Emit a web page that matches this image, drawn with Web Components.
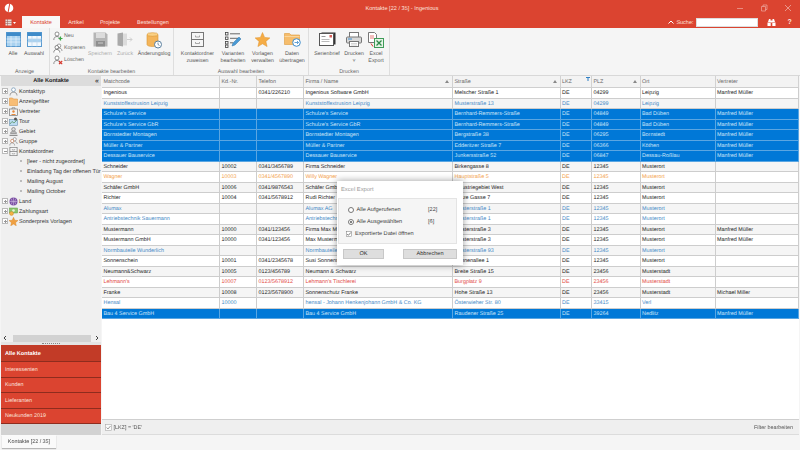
<!DOCTYPE html>
<html lang="de"><head><meta charset="utf-8"><title>Kontakte</title>
<style>
html,body{margin:0;padding:0;width:800px;height:450px;overflow:hidden;background:#f5f5f5;font-family:"Liberation Sans",Arial,sans-serif;font-size:5.4px;color:#222;text-rendering:geometricPrecision}
</style></head><body>
<crm-app></crm-app>
<script>
const ICONS={
tableAll:`<svg width="15" height="15" viewBox="0 0 15 15"><rect x=".5" y=".5" width="14" height="14" fill="#a9d2f0" stroke="#5b9bd0"/><rect x=".5" y=".5" width="14" height="3.5" fill="#3f8bc9"/><path d="M.5 7h14M.5 10h14M5 4v10.500M10 4v10.500" stroke="#e6f2fb" stroke-width=".7"/></svg>`,
tableSel:`<svg width="15" height="15" viewBox="0 0 15 15"><rect x=".5" y=".5" width="14" height="14" fill="#f2f8fd" stroke="#5b9bd0"/><rect x=".5" y=".5" width="14" height="3.5" fill="#3f8bc9"/><rect x="1" y="7" width="13" height="3" fill="#a9d2f0"/><path d="M.5 7h14M.5 10h14M5 4v10.500M10 4v10.500" stroke="#b9d6ec" stroke-width=".7"/></svg>`,
pNew:`<svg width="10" height="10" viewBox="0 0 10 10"><circle cx="4" cy="3" r="2" fill="#fff" stroke="#666" stroke-width=".7"/><path d="M.8 9c0-2.500 1.500-3.500 3.200-3.500S7 6.500 7 9" fill="none" stroke="#666" stroke-width=".7"/><path d="M7.500 5.500v4M5.500 7.500h4" stroke="#3aa845" stroke-width="1.200"/></svg>`,
pCopy:`<svg width="10" height="10" viewBox="0 0 10 10"><circle cx="6" cy="2.800" r="1.800" fill="#fff" stroke="#777" stroke-width=".7"/><path d="M3.500 8c0-2 1-3 2.500-3s3 1 3 3" fill="none" stroke="#777" stroke-width=".7"/><circle cx="3.800" cy="4.300" r="1.800" fill="#fff" stroke="#555" stroke-width=".7"/><path d="M.8 9.500c0-2 1.300-3 3-3s3 1 3 3" fill="#fff" stroke="#555" stroke-width=".7"/></svg>`,
pDel:`<svg width="10" height="10" viewBox="0 0 10 10"><circle cx="4" cy="3" r="2" fill="#fff" stroke="#666" stroke-width=".7"/><path d="M.8 9c0-2.500 1.500-3.500 3.200-3.500S7 6.500 7 9" fill="none" stroke="#666" stroke-width=".7"/><path d="M6 6l3.200 3.200M9.200 6L6 9.200" stroke="#d9352a" stroke-width="1.100"/></svg>`,
save:`<svg width="15" height="15" viewBox="0 0 15 15"><path d="M.5.500h12l2 2v12H.5z" fill="#b5b5b5"/><rect x="3" y="1" width="9" height="5" fill="#dcdcdc"/><rect x="3" y="9" width="9" height="5.500" fill="#8f8f8f"/><rect x="5" y="10.500" width="5" height="1" fill="#ccc"/></svg>`,
back:`<svg width="16" height="15" viewBox="0 0 16 15"><path d="M.5 1.500L6 .5v14l-5.500-1z" fill="#a9a9a9"/><path d="M6 1.500h4v12H6z" fill="#dcdcdc"/><path d="M10 7.500h5M13 5.500l2 2-2 2" stroke="#cfcfcf" fill="none"/></svg>`,
log:`<svg width="17" height="17" viewBox="0 0 17 17"><path d="M1 2.500v10c0 1.200 2.500 2 5.500 2s5.500-.8 5.500-2v-10z" fill="#f4b55a" stroke="#d9932f" stroke-width=".6"/><ellipse cx="6.500" cy="2.500" rx="5.500" ry="1.800" fill="#fad186" stroke="#d9932f" stroke-width=".6"/><circle cx="12" cy="12.500" r="3.500" fill="#fff" stroke="#5a7f9e"/><path d="M12 10.500v2l1.500 1" stroke="#44627b" stroke-width=".7" fill="none"/></svg>`,
cabinet:`<svg width="15" height="15" viewBox="0 0 15 15"><rect x="1.500" y=".5" width="12" height="14" fill="#f6f6f6" stroke="#777"/><path d="M1.500 7.500h12" stroke="#777"/><path d="M5.500 3.500v1.500h4V3.500M5.500 10v1.500h4V10" fill="none" stroke="#888" stroke-width=".7"/></svg>`,
cabinet9:`<svg width="9" height="9" viewBox="0 0 15 15"><rect x="1.500" y=".5" width="12" height="14" fill="#f6f6f6" stroke="#777" stroke-width="1.200"/><path d="M1.500 7.500h12" stroke="#777" stroke-width="1.200"/><path d="M5.500 3.500v1.500h4V3.500M5.500 10v1.500h4V10" fill="none" stroke="#888"/></svg>`,
variants:`<svg width="17" height="16" viewBox="0 0 17 16"><g fill="none" stroke="#444" stroke-width=".8"><rect x=".5" y=".5" width="2.500" height="2.500"/><rect x=".5" y="5" width="2.500" height="2.500"/><rect x=".5" y="9.500" width="2.500" height="2.500"/><rect x=".5" y="13" width="2.500" height="2.500"/><path d="M5 1.800h10M5 6.300h8M5 10.800h3"/></g><path d="M7 14l1-3 6-6 2 2-6 6z" fill="#4a9ad4" stroke="#2f74aa" stroke-width=".5"/></svg>`,
star:`<svg width="15" height="15" viewBox="0 0 15 15"><path d="M7.500.5l2.100 4.900 5.300.5-4 3.500 1.200 5.200-4.600-2.800-4.600 2.800 1.200-5.200-4-3.500 5.300-.5z" fill="#f5ac45" stroke="#e1922a" stroke-width=".5"/></svg>`,
folderSync:`<svg width="17" height="15" viewBox="0 0 17 15"><path d="M.5 1.500h5l1.500 1.500h8.500v9.500H.5z" fill="#f6bd6c" stroke="#dd9a3c" stroke-width=".6"/><path d="M.5 4.500h15" stroke="#fbdca9" stroke-width=".8"/><circle cx="12.500" cy="10.500" r="3.800" fill="#fff" stroke="#3d8ccb"/><path d="M10.500 10.500h4M13 9l1.500 1.500L13 12" stroke="#3d8ccb" fill="none" stroke-width=".8"/></svg>`,
serial:`<svg width="17" height="14" viewBox="0 0 17 14"><rect x="2.500" y=".5" width="14" height="12" fill="#333"/><rect x=".5" y="1.500" width="14" height="12" fill="#fff" stroke="#555"/><rect x="2.500" y="4" width="4" height="1" fill="#999"/><rect x="2.500" y="7" width="8" height=".8" fill="#aaa"/><rect x="2.500" y="9" width="8" height=".8" fill="#aaa"/><rect x="10.500" y="3" width="2.500" height="2.500" fill="#d8605a"/></svg>`,
printer:`<svg width="16" height="15" viewBox="0 0 16 15"><rect x="3.500" y=".5" width="9" height="5" fill="#fff" stroke="#777"/><rect x=".5" y="5" width="15" height="6" rx="1" fill="#d8d8d8" stroke="#777"/><rect x="2" y="6.500" width="4" height="1" fill="#3d8ccb"/><rect x="3.500" y="9.500" width="9" height="5" fill="#fff" stroke="#777"/><path d="M5 11.500h6M5 13h6" stroke="#bbb" stroke-width=".6"/></svg>`,
excel:`<svg width="16" height="16" viewBox="0 0 16 16"><path d="M.5.500h6l2 2v8h-8z" fill="#fff" stroke="#777"/><path d="M2 4h4M2 6h4" stroke="#e25a5a" stroke-width=".8"/><rect x="6.500" y="6.500" width="9" height="9" fill="#e6f3e6" stroke="#3e9c58"/><path d="M8.500 8.500l5 5M13.500 8.500l-5 5" stroke="#2d8a47" stroke-width="1.300"/><path d="M3 11.500l2 3" stroke="#d9352a"/></svg>`,
person:`<svg width="9" height="9" viewBox="0 0 9 9"><circle cx="4.500" cy="2.700" r="1.900" fill="#fff" stroke="#6a8fb0" stroke-width=".7"/><path d="M1 8.500c0-2.300 1.500-3.300 3.500-3.300S8 6.200 8 8.500" fill="none" stroke="#7a7a7a" stroke-width=".7"/></svg>`,
folder:`<svg width="9" height="9" viewBox="0 0 9 9"><path d="M.5 1h3l1 1h4v6.500h-8z" fill="#f8bd75" stroke="#df9a4a" stroke-width=".6"/></svg>`,
rep:`<svg width="9" height="9" viewBox="0 0 9 9"><rect x=".5" y="2" width="8" height="6.500" fill="#f3f3f3" stroke="#777" stroke-width=".7"/><path d="M3 2V.8h3V2" fill="none" stroke="#777" stroke-width=".7"/><circle cx="4.500" cy="4.500" r="1.200" fill="#e78a3c"/><path d="M2.500 7.500h4" stroke="#e78a3c"/></svg>`,
tour:`<svg width="9" height="9" viewBox="0 0 9 9"><rect x=".5" y="2.500" width="8" height="6" fill="#bcdcf2" stroke="#6a8fb0" stroke-width=".6"/><path d="M1 7l2-2.500L5 6l3-3" stroke="#4f8f55" stroke-width=".7" fill="none"/><circle cx="6.500" cy="2" r="1.500" fill="#555"/></svg>`,
area:`<svg width="9" height="9" viewBox="0 0 9 9"><circle cx="4.500" cy="2.300" r="1.800" fill="#ddd" stroke="#666" stroke-width=".6"/><path d="M1.500 6.500c0-1.500 1.300-2.300 3-2.300s3 .8 3 2.300z" fill="#bbb" stroke="#666" stroke-width=".5"/><path d="M.5 8.300h8" stroke="#777"/></svg>`,
group:`<svg width="9" height="9" viewBox="0 0 9 9"><circle cx="5.700" cy="2.200" r="1.600" fill="#fff" stroke="#777" stroke-width=".6"/><circle cx="3.200" cy="4" r="1.600" fill="#fff" stroke="#c56a3a" stroke-width=".6"/><path d="M.8 8.500c0-1.700 1-2.600 2.400-2.600S5.600 6.800 5.600 8.500M5.500 4.500c1.500 0 2.700.8 2.700 2.500" fill="none" stroke="#777" stroke-width=".6"/></svg>`,
globe:`<svg width="9" height="9" viewBox="0 0 9 9"><circle cx="4.500" cy="4.500" r="4" fill="#7b4fa3"/><path d="M.5 4.500h8M4.500.5v8M2 1.500c1.500 2 1.500 4 0 6M7 1.500c-1.500 2-1.500 4 0 6" stroke="#d9c8e8" stroke-width=".5" fill="none"/></svg>`,
pay:`<svg width="9" height="9" viewBox="0 0 9 9"><rect x=".5" y="1" width="8" height="5" fill="#8cc66d" stroke="#5b9a40" stroke-width=".5"/><circle cx="4.500" cy="3.500" r="1.300" fill="#e6f3d8"/><circle cx="2.500" cy="6.500" r="2" fill="#f3b144" stroke="#c9862a" stroke-width=".4"/></svg>`,
star9:`<svg width="9" height="9" viewBox="0 0 15 15"><path d="M7.500.5l2.100 4.900 5.300.5-4 3.500 1.200 5.200-4.600-2.800-4.600 2.800 1.200-5.200-4-3.500 5.300-.5z" fill="#f0a040" stroke="#d98a2a" stroke-width=".8"/></svg>`
};
function def(name,css,html){
  customElements.define(name,class extends HTMLElement{
    constructor(){super();this.attachShadow({mode:'open'});}
    connectedCallback(){
      const t=typeof html==='function'?html(this):html;
      this.shadowRoot.innerHTML=`<style>${css}</style>${t}`;
    }
  });
}
const a=(el,n,d='')=>el.getAttribute(n)??d;

def('crm-titlebar',`
:host{display:flex;flex-direction:column;height:28px;background:#db4430;color:#fff;flex:none}
.top{height:16px;display:grid;grid-template-columns:1fr auto 1fr;align-items:center;padding:0 0 0 4px}
.title{font-size:5.6px;color:#fbe3df;padding-top:1px}
.logo{display:block}
.win{justify-self:end;display:flex;align-items:center;opacity:.55}
.win span{width:24px;display:flex;justify-content:center}
`,`<div class="top"><svg class="logo" width="10" height="10" viewBox="0 0 10 10"><circle cx="5" cy="5" r="4.300" fill="#fff"/><path d="M5.800 .3L4 9.800" stroke="#db4430" stroke-width="1"/></svg>
<span class="title">Kontakte [22 / 35] - Ingenious</span>
<div class="win"><span><svg width="8" height="8"><path d="M1 4.500h6" stroke="#fff" stroke-width=".7"/></svg></span><span><svg width="8" height="8"><path d="M1.500 2.500h4v4.500h-4zM3 2.500V1h4v4.500H5.500" fill="none" stroke="#fff" stroke-width=".7"/></svg></span><span><svg width="8" height="8"><path d="M1 1l6 6M7 1L1 7" stroke="#fff" stroke-width=".8"/></svg></span></div></div>
<slot></slot>`);

def('crm-tabs',`
:host{display:flex;height:12px;align-items:stretch;font-size:5.5px;color:#fbe3df}
.menu{width:22px;display:flex;align-items:center;padding-left:5px;box-sizing:border-box;gap:1px}
.tab{display:flex;align-items:center;justify-content:center;padding-top:1px;box-sizing:border-box}
.on{background:#f8f8f8;color:#db4430;width:38px}
.search{margin-left:auto;display:flex;align-items:center;height:12px}
.lab{padding-top:1px}
.chev{width:6px;margin-right:2px;display:flex}
input{width:62px;height:9px;box-sizing:border-box;border:1px solid #ddd;background:#fff;padding:0;margin:0 8.500px 0 2.500px}
.q{font-size:7px;font-weight:bold;margin-left:12px;width:12.500px}
`,`<div class="menu"><svg width="7" height="7" viewBox="0 0 7 7"><rect x=".5" y=".5" width="6" height="6" fill="#e9dcd9"/><path d="M0 2.500h7M0 4.500h7M2.500 0v7" stroke="#a5675c" stroke-width=".6"/></svg><svg width="3" height="3"><path d="M0 1h3L1.500 3z" fill="#fff"/></svg></div>
<div class="tab on">Kontakte</div><div class="tab" style="width:32px">Artikel</div><div class="tab" style="width:36px">Projekte</div><div class="tab" style="width:50px">Bestellungen</div>
<div class="search"><span class="chev"><svg width="6" height="4"><path d="M.5 3.500L3 1l2.500 2.500" fill="none" stroke="#fff"/></svg></span><span class="lab">Suche:</span><input aria-label="Suche"><svg width="9" height="9" viewBox="0 0 9 9"><path d="M1 4l1-3h1.500v3zM8 4L7 1H5.500v3zM3.500 2.500h2v2h-2z" fill="#fff"/><rect x=".5" y="4.500" width="3.200" height="3.500" fill="#fff"/><rect x="5.300" y="4.500" width="3.200" height="3.500" fill="#fff"/></svg><span class="q">?</span></div>`);

def('rb-group',`
:host{display:flex;flex-direction:column;height:47px;border-right:1px solid #dedede;box-sizing:border-box;flex:none}
.c{display:flex;flex:1;align-items:flex-start;padding-top:4px;padding-left:var(--pad,2px)}
.l{height:8px;line-height:10px;text-align:center;color:#666;font-size:5.3px}
`,el=>`<div class="c"><slot></slot></div><div class="l">${a(el,'label')}</div>`);

def('rb-btn',`
:host{display:flex;flex-direction:column;align-items:center;flex:none;color:#555;font-size:5.3px;line-height:7px;text-align:center}
:host([off]){color:#aaa}
.i{height:18.500px;display:flex;align-items:flex-start;justify-content:center}
svg{display:block}
.t{white-space:nowrap}
`,el=>`<div class="i">${ICONS[a(el,'icon')]}</div><div class="t">${a(el,'text').split('|').join('<br>')}</div>`);

def('rb-small',`
:host{display:flex;align-items:center;height:12px;color:#666;font-size:5.3px;gap:1px;white-space:nowrap;padding-left:1px}
svg{display:block}
`,el=>`${ICONS[a(el,'icon')]}<span>${a(el,'text')}</span>`);

def('rb-stack',`:host{display:flex;flex-direction:column;width:36px;flex:none;margin-top:-2px}`,`<slot></slot>`);

def('crm-ribbon',`
:host{display:flex;height:48px;background:#f5f5f5;border-bottom:1px solid #d8d8d8;box-sizing:border-box;flex:none}
`,`<slot></slot>`);

def('tree-item',`
:host{display:flex;align-items:center;height:10px;white-space:nowrap;color:#333;font-size:5.5px}
.x{width:4px;height:4px;border:.5px solid #bbb;background:#fff;margin:0 1px 0 1px;position:relative;flex:none;box-sizing:content-box}
.x::before{content:"";display:block;position:absolute;left:.5px;right:.5px;top:1.750px;height:.5px;background:#999}
.x.p::after{content:"";display:block;position:absolute;top:.5px;bottom:.5px;left:1.750px;width:.5px;background:#999}
svg{display:block;margin-right:1px;flex:none}
.d{width:2px;height:2px;border-radius:50%;background:#aaa;margin:0 5px 0 19px;flex:none}
.n{padding-top:1px}
`,el=>el.hasAttribute('child')
 ?`<span class="d"></span><span class="n">${a(el,'text')}</span>`
 :`<span class="x ${el.hasAttribute('open')?'':'p'}"></span>${ICONS[a(el,'icon')]}<span class="n">${a(el,'text')}</span>`);

def('nav-item',`
:host{display:flex;align-items:center;height:15.500px;padding:1px 0 0 4px;color:#fbe4df;background:#db4430;border-bottom:1px solid #8e2c1e;box-sizing:border-box;font-size:5.4px}
:host([active]){background:#c23b27;font-weight:bold;color:#fff;height:17px;font-size:5.6px}
`,`<slot></slot>`);

def('crm-side',`
:host{display:flex;flex-direction:column;width:100px;margin-left:1px;margin-right:1px;background:#f0f0f0;flex:none;min-height:0}
.h{height:10px;background:#dcdcdc;display:flex;align-items:center;justify-content:center;font-weight:bold;font-size:5.6px;position:relative;flex:none;color:#222;padding-top:.5px;box-sizing:border-box}
.h b{position:absolute;right:2px;top:1.500px;font-size:7px;font-weight:bold;line-height:7px;color:#444}
.tree{flex:1;overflow:hidden;min-height:0}
.sb{height:8px;display:flex;align-items:center;flex:none;color:#444}
.sb i{flex:1;height:7px;background:#d2d2d2;margin:0 2px 0 4px}
.sb svg{margin:0 2px;flex:none}
.split{height:3px;display:flex;justify-content:center;align-items:center;background:#e4e4e4;flex:none}
.split span{width:18px;border-top:1px dotted #888}
.foot{height:11px;background:#d2d2d2;flex:none}
`,`<div class="h">Alle Kontakte<b>«</b></div>
<div class="tree"><slot name="tree"></slot></div>
<div class="sb"><svg width="4" height="6"><path d="M3 1L1 3l2 2" fill="none" stroke="#444"/></svg><i></i><svg width="4" height="6"><path d="M1 1l2 2-2 2" fill="none" stroke="#444"/></svg></div>
<div class="split"><span></span></div>
<slot name="nav"></slot>
<div class="foot"></div>`);

const COLS='118px 37px 47px 149px 107.500px 31.500px 48.500px 75px 83px';
const HEAD=[['Matchcode'],['Kd.-Nr.'],['Telefon'],['Firma / Name','s'],['Straße','s'],['LKZ','f'],['PLZ','s'],['Ort'],['Vertreter']];
const M='Manfred Müller';
const ROWS=[
['','Ingenious','','0341/226210','Ingenious Software GmbH','Melscher Straße 1','DE','04299','Leipzig',M],
['b','Kunststoffextrusion Leipzig','','','Kunststoffextrusion Leipzig','Musterstraße 13','DE','04299','Leipzig',''],
['s',"Schulze's Service",'','',"Schulze's Service",'Bernhard-Remmers-Straße','DE','04849','Bad Düben',M],
['s',"Schulze's Service GbR",'','',"Schulze's Service GbR",'Bernhard-Remmers-Straße','DE','04849','Bad Düben',M],
['s','Bornstedter Montagen','','','Bornstedter Montagen','Bergstraße 38','DE','06295','Bornstedt',M],
['s','Müller &amp; Partner','','','Müller &amp; Partner','Edderitzer Straße 7','DE','06366','Köthen',M],
['s','Dessauer Bauservice','','','Dessauer Bauservice','Junkersstraße 52','DE','06847','Dessau-Roßlau',M],
['','Schneider','10002','0341/3456789','Firma Schneider','Birkengasse 8','DE','12345','Musterort',''],
['o','Wagner','10003','0341/4567890','Willy Wagner','Hauptstraße 5','DE','12345','Musterort',''],
['','Schäfer GmbH','10006','0341/9876543','Schäfer GmbH','Industriegebiet West','DE','12345','Musterort',''],
['','Richter','10004','0341/5678912','Rudi Richter','Kurze Gasse 7','DE','12345','Musterort',''],
['b','Alumax','','','Alumax AG','Musterstraße 1','DE','12345','Musterort',''],
['b','Antriebstechnik Sauermann','','','Antriebstechnik Sauermann','Musterstraße 1','DE','12345','Musterort',''],
['','Mustermann','10000','0341/123456','Firma Max Mustermann','Musterstraße 3','DE','12345','Musterort',M],
['','Mustermann GmbH','10000','0341/123456','Max Mustermann','Musterstraße 3','DE','12345','Musterort',M],
['b','Normbauteile Wunderlich','','','Normbauteile Wunderlich','Musterstraße 93','DE','12345','Musterort',''],
['','Sonnenschein','10001','0341/2345678','Susi Sonnenschein','Sonnenallee 1','DE','12345','Musterort',''],
['','Neumann&amp;Schwarz','10005','0123/456789','Neumann &amp; Schwarz','Breite Straße 15','DE','23456','Musterstadt',''],
['r',"Lehmann's",'10007','0123/5678912',"Lehmann's Tischlerei",'Burgplatz 9','DE','23456','Musterstadt',''],
['','Franke','10008','0123/5678900','Sonnenschutz Franke','Hohe Straße 13','DE','23456','Musterstadt','Michael Miller'],
['b','Hensal','10000','','hensal - Johann Henkenjohann GmbH &amp; Co. KG','Österwieher Str. 80','DE','33415','Verl',''],
['s','Bau 4 Service GmbH','','','Bau 4 Service GmbH','Raudener Straße 25','DE','39264','Nedlitz',M]
];
def('data-grid',`
:host{display:flex;flex-direction:column;flex:1;min-height:0;background:#fff;font-size:5.4px}
.g{display:grid;grid-template-columns:${COLS};grid-auto-rows:10.500px;flex:1;align-content:start;overflow:hidden}
.hd{height:12px;display:grid;grid-template-columns:${COLS};background:#f3f3f3;border-bottom:1px solid #cfcfcf;box-sizing:border-box;flex:none;color:#666}
.hd div{display:flex;align-items:center;padding:1px 0 0 1.500px;border-right:1px solid #d2d2d2;position:relative;box-sizing:border-box;white-space:nowrap}
.hd svg{position:absolute;right:3px;top:3.500px}
.c{display:flex;align-items:center;padding:1px 0 0 1.500px;border-right:1px solid #cdcdcd;border-bottom:1px solid #cdcdcd;box-sizing:border-box;white-space:nowrap;overflow:hidden;color:#222}
.alt{background:#f5f5f5}
.b{color:#3f88c5}.o{color:#f3a04a}.r{color:#e2483f}
.s{background:#0078d7;color:#cfe6f8;border-color:#5aa6e2}
`,()=>`<div class="hd">${HEAD.map(h=>`<div>${h[0]}${h[1]==='s'?'<svg width="4" height="3"><path d="M2 0l2 3H0z" fill="#888"/></svg>':h[1]==='f'?'<svg width="4" height="4" style="top:1px;right:1.500px"><path d="M0 0h4v1H2.500v3h-1V1H0z" fill="#2f7fc4"/></svg>':''}</div>`).join('')}</div>
<div class="g">${ROWS.map((r,i)=>r.slice(1).map(v=>`<div class="c ${i%2?'alt':''} ${r[0]}">${v}</div>`).join('')).join('')}</div>`);

def('filter-bar',`
:host{display:flex;align-items:center;height:16px;background:#efefef;border-top:1px solid #cfcfcf;border-bottom:1px solid #dcdcdc;box-sizing:border-box;padding:0 5.500px 0 3px;color:#555;font-size:5.4px;flex:none}
svg{display:block;margin-right:1.500px}
span{padding-top:1px}
.r{margin-left:auto}
`,`<svg width="7" height="7" viewBox="0 0 7 7"><rect x=".5" y=".5" width="6" height="6" fill="#fafafa" stroke="#aaa" stroke-width=".6"/><path d="M1.500 3.500l1.500 1.500 2.500-3" fill="none" stroke="#777" stroke-width=".7"/></svg><span>[LKZ] = 'DE'</span><span class="r">Filter bearbeiten</span>`);

def('status-bar',`
:host{display:flex;height:15px;background:#f5f5f5;align-items:flex-start;flex:none;font-size:5.4px;color:#444;padding-left:2px;box-sizing:border-box}
.t{height:13px;width:54px;background:#fafafa;box-shadow:0 1px 1px rgba(0,0,0,.25);display:flex;align-items:center;justify-content:center;padding-top:1px;box-sizing:border-box}
`,`<div class="t">Kontakte [22 / 35]</div>`);

def('export-dialog',`
:host{position:absolute;left:337px;top:181px;width:126px;height:84px;background:#fff;box-shadow:0 0 7px rgba(0,0,0,.4);box-sizing:border-box;display:flex;flex-direction:column;font-size:5.6px;color:#444}
.t{height:17px;display:flex;align-items:center;padding-left:4px;color:#999;font-size:5.8px;flex:none}
.box{margin:0 6px 0 1px;background:#f5f5f5;border:1px solid #e4e4e4;height:46px;box-sizing:border-box;padding:5px 6px 0 8.500px;display:grid;grid-template-columns:1fr 22px;grid-auto-rows:12px;align-items:center;flex:none}
.o{display:flex;align-items:center;gap:3px}
.r{width:6px;height:6px;border-radius:50%;background:#fff;border:.7px solid #777;box-sizing:border-box;position:relative;flex:none}
.r.on::after{content:"";position:absolute;inset:1px;border-radius:50%;background:#555}
.full{grid-column:1/3;display:flex;align-items:center;gap:3px;margin-left:-1.500px}
.cb{width:6px;height:6px;display:block;flex:none}
.btns{display:flex;justify-content:space-between;margin:5px 6px 0;}
.btn{height:10px;background:#dedede;border:1px solid #c8c8c8;box-sizing:border-box;display:flex;align-items:center;justify-content:center;color:#333}
`,`<div class="t">Excel Export</div>
<div class="box"><div class="o"><span class="r"></span>Alle Aufgerufenen</div><div>[22]</div>
<div class="o"><span class="r on"></span>Alle Ausgewählten</div><div>[6]</div>
<div class="full"><svg class="cb" viewBox="0 0 6 6"><rect x=".3" y=".3" width="5.400" height="5.400" fill="#fff" stroke="#777" stroke-width=".5"/><path d="M1.200 3l1.200 1.300L4.800 1.500" fill="none" stroke="#444" stroke-width=".7"/></svg>Exportierte Datei öffnen</div></div>
<div class="btns"><div class="btn" style="width:41px">OK</div><div class="btn" style="width:54px">Abbrechen</div></div>`);

def('crm-app',`
:host{display:flex;flex-direction:column;width:800px;height:450px;position:relative;background:#f5f5f5;filter:blur(.3px)}
.main{display:flex;flex:1;min-height:0}
.right{flex:1;display:flex;flex-direction:column;min-width:0;margin-right:1.500px;box-sizing:border-box}
`,`<crm-titlebar><crm-tabs></crm-tabs></crm-titlebar>
<crm-ribbon>
<rb-group label="Anzeige" style="width:50px"><rb-btn icon="tableAll" text="Alle" style="width:22px"></rb-btn><rb-btn icon="tableSel" text="Auswahl" style="width:20px"></rb-btn></rb-group>
<rb-group label="Kontakte bearbeiten" style="width:124px"><rb-stack><rb-small icon="pNew" text="Neu"></rb-small><rb-small icon="pCopy" text="Kopieren"></rb-small><rb-small icon="pDel" text="Löschen"></rb-small></rb-stack><rb-btn off icon="save" text="Speichern" style="width:24px"></rb-btn><rb-btn off icon="back" text="Zurück" style="width:26px"></rb-btn><rb-btn icon="log" text="Änderungslog" style="width:32px"></rb-btn></rb-group>
<rb-group label="Auswahl bearbeiten" style="width:135px;--pad:4px"><rb-btn icon="cabinet" text="Kontaktordner|zuweisen" style="width:39px"></rb-btn><rb-btn icon="variants" text="Varianten|bearbeiten" style="width:32px"></rb-btn><rb-btn icon="star" text="Vorlagen|verwalten" style="width:27px"></rb-btn><rb-btn icon="folderSync" text="Daten|übertragen" style="width:32px"></rb-btn></rb-group>
<rb-group label="Drucken" style="width:81px;--pad:3px"><rb-btn icon="serial" text="Serienbrief" style="width:30px"></rb-btn><rb-btn icon="printer" text="Drucken|˅" style="width:24px"></rb-btn><rb-btn icon="excel" text="Excel|Export" style="width:20px"></rb-btn></rb-group>
</crm-ribbon>
<div class="main">
<crm-side>
<tree-item slot="tree" icon="person" text="Kontakttyp"></tree-item>
<tree-item slot="tree" icon="folder" text="Anzeigefilter"></tree-item>
<tree-item slot="tree" icon="rep" text="Vertreter"></tree-item>
<tree-item slot="tree" icon="tour" text="Tour"></tree-item>
<tree-item slot="tree" icon="area" text="Gebiet"></tree-item>
<tree-item slot="tree" icon="group" text="Gruppe"></tree-item>
<tree-item slot="tree" open icon="cabinet9" text="Kontaktordner"></tree-item>
<tree-item slot="tree" child text="[leer - nicht zugeordnet]"></tree-item>
<tree-item slot="tree" child text="Einladung Tag der offenen Tür"></tree-item>
<tree-item slot="tree" child text="Mailing August"></tree-item>
<tree-item slot="tree" child text="Mailing October"></tree-item>
<tree-item slot="tree" icon="globe" text="Land"></tree-item>
<tree-item slot="tree" icon="pay" text="Zahlungsart"></tree-item>
<tree-item slot="tree" icon="star9" text="Sonderpreis Vorlagen"></tree-item>
<nav-item slot="nav" active>Alle Kontakte</nav-item>
<nav-item slot="nav">Interessenten</nav-item>
<nav-item slot="nav">Kunden</nav-item>
<nav-item slot="nav">Lieferanten</nav-item>
<nav-item slot="nav">Neukunden 2019</nav-item>
</crm-side>
<div class="right"><data-grid></data-grid><filter-bar></filter-bar></div>
</div>
<status-bar></status-bar>
<export-dialog></export-dialog>`);
</script>
</body></html>
